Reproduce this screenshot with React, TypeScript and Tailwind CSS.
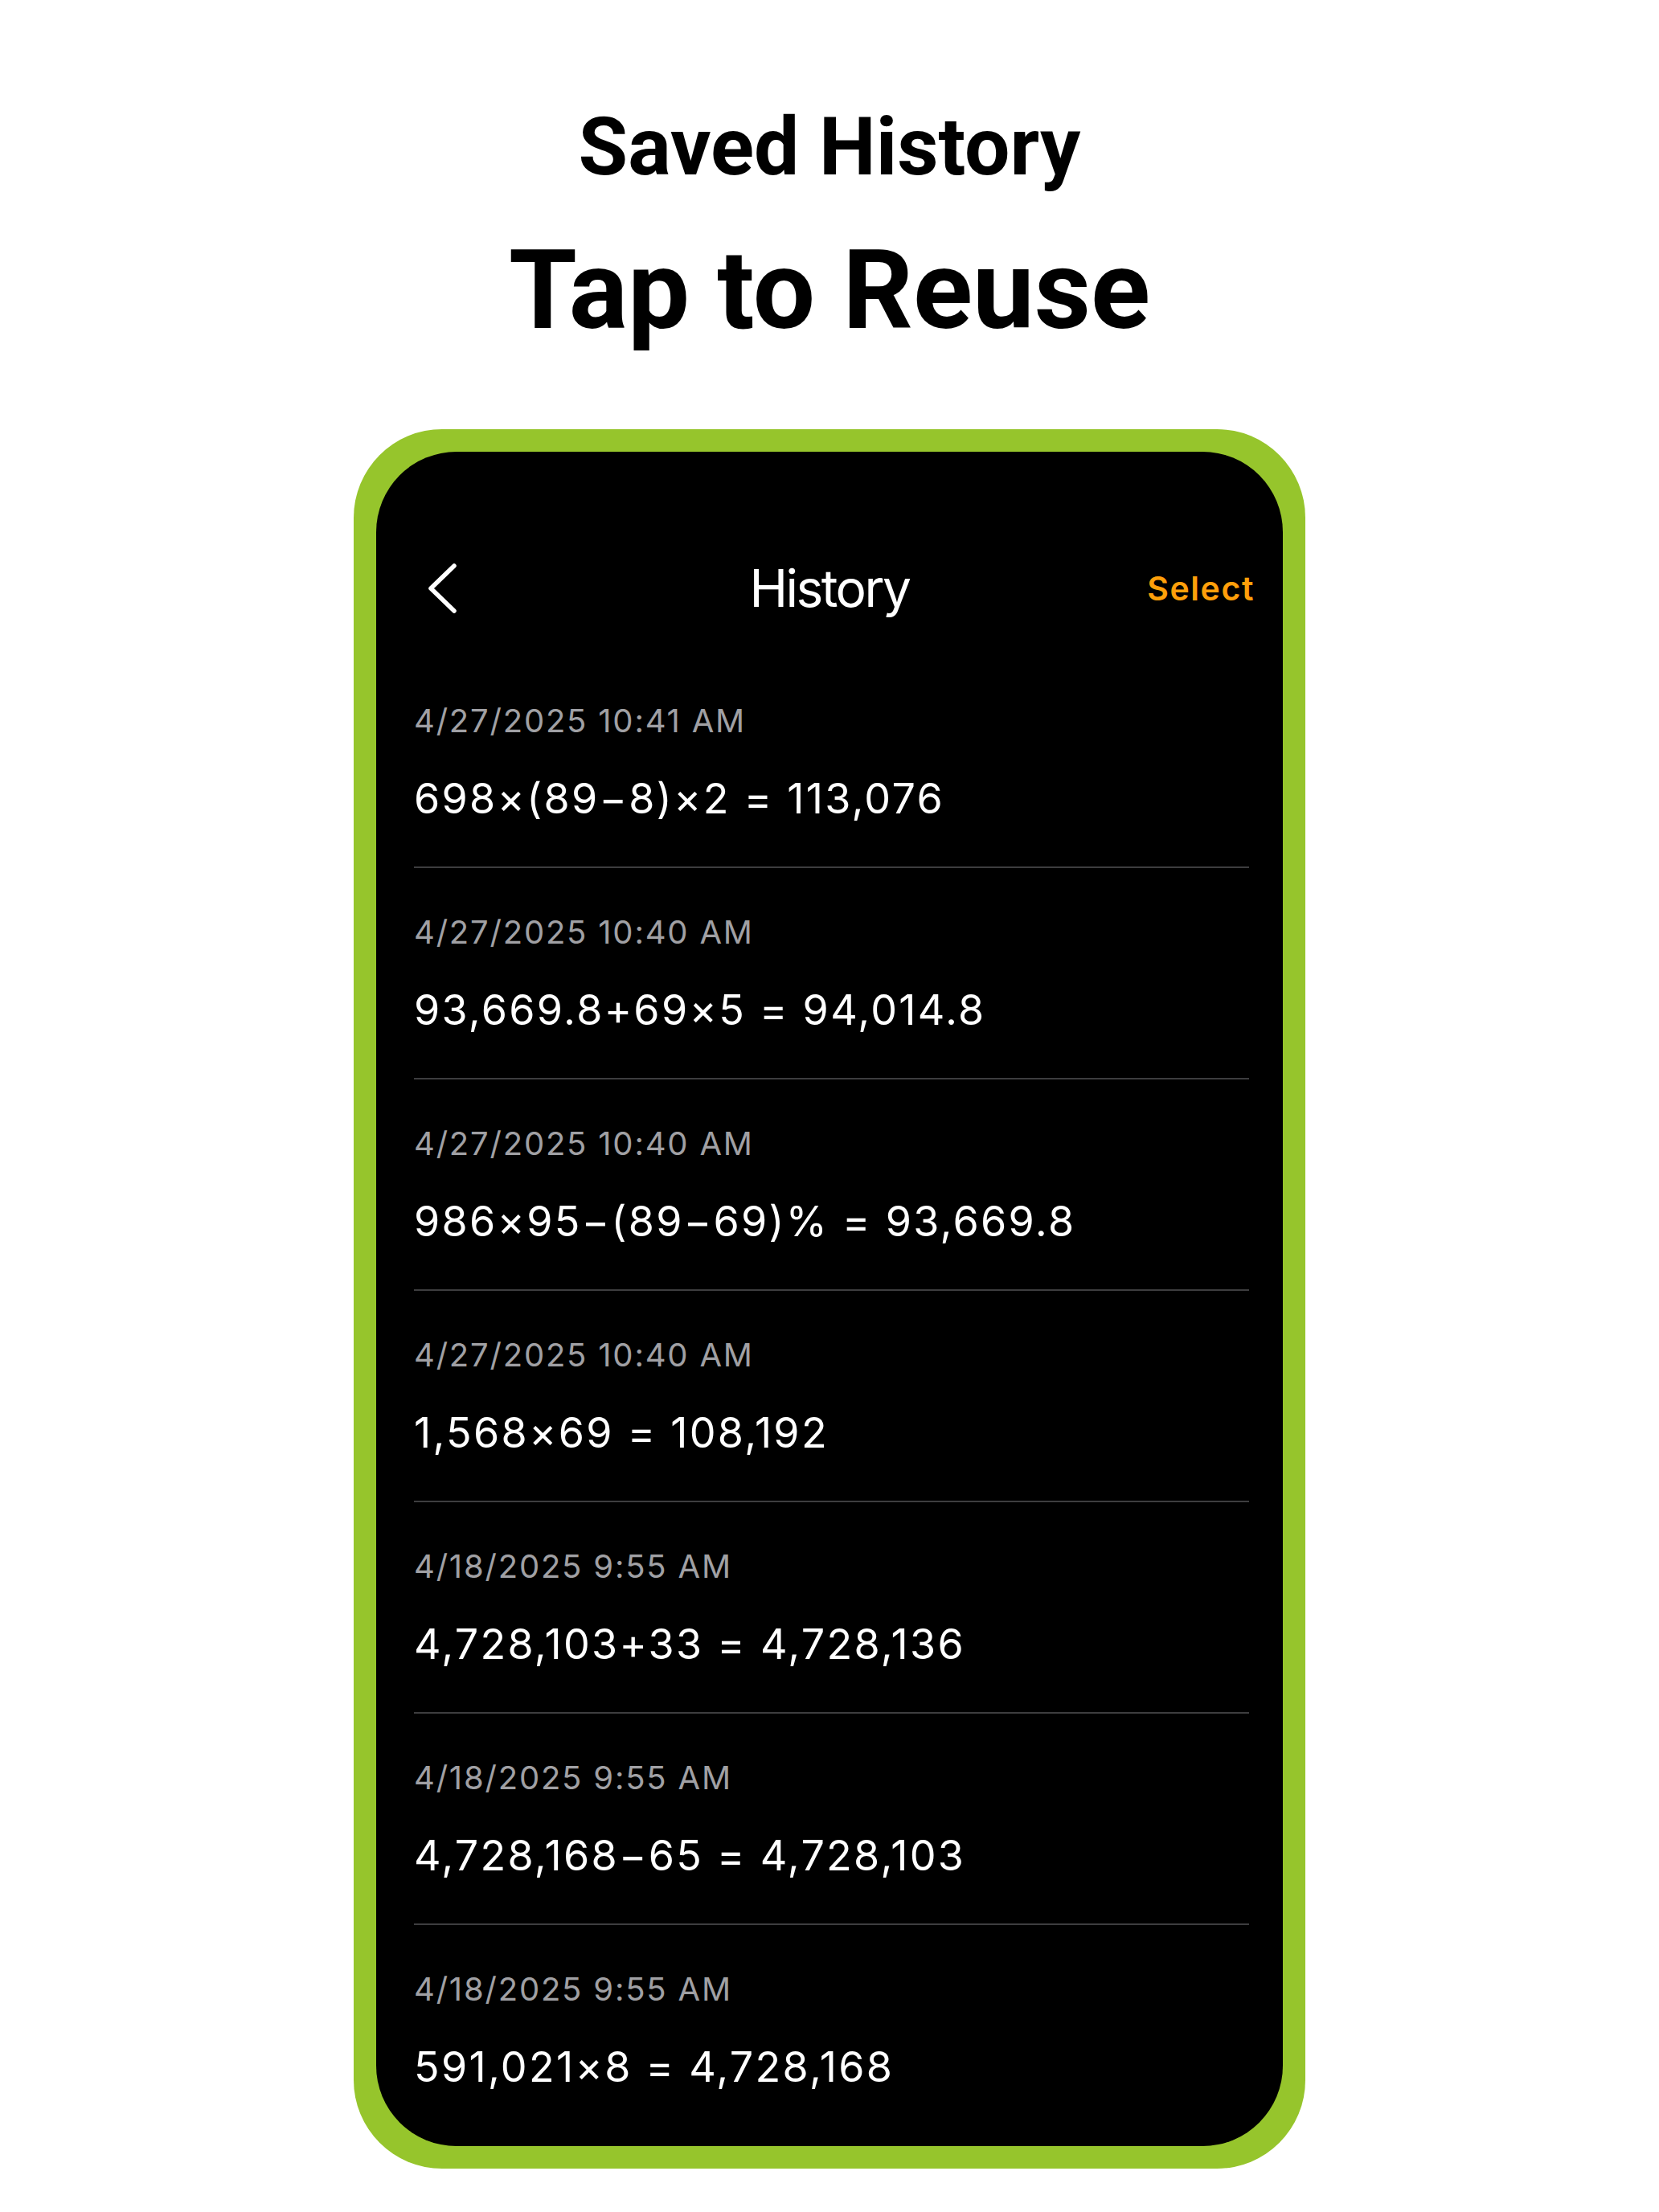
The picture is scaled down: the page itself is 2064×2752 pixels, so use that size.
import React from "react";

interface Entry {
  date: string;
  expr: string;
}

const entries: Entry[] = [
  { date: "4/27/2025 10:41 AM", expr: "698×(89−8)×2 = 113,076" },
  { date: "4/27/2025 10:40 AM", expr: "93,669.8+69×5 = 94,014.8" },
  { date: "4/27/2025 10:40 AM", expr: "986×95−(89−69)% = 93,669.8" },
  { date: "4/27/2025 10:40 AM", expr: "1,568×69 = 108,192" },
  { date: "4/18/2025 9:55 AM", expr: "4,728,103+33 = 4,728,136" },
  { date: "4/18/2025 9:55 AM", expr: "4,728,168−65 = 4,728,103" },
  { date: "4/18/2025 9:55 AM", expr: "591,021×8 = 4,728,168" },
];

function BackChevron() {
  return (
    <svg width="40" height="64" viewBox="0 0 40 64" fill="none">
      <path d="M35 4 L6 32 L35 60" stroke="white" strokeWidth="5.5" strokeLinecap="round" strokeLinejoin="round" />
    </svg>
  );
}

export default function App() {
  return (
    <div className="w-[2064px] h-[2752px] bg-white flex flex-col items-center overflow-hidden">
      {/* headline */}
      <div className="mt-[133px] text-center text-black font-bold font-['Roboto',sans-serif]">
        <div className="text-[100px] leading-[100px]">Saved History</div>
        <div className="mt-[60px] text-[137px] leading-[137px]">Tap to Reuse</div>
      </div>

      {/* phone frame */}
      <div className="mt-[104px] w-[1184px] h-[2164px] rounded-[110px] bg-[#96c52c] p-[28px]">
        <div className="h-full w-full rounded-[100px] bg-black overflow-hidden font-['Inter',sans-serif]">
          {/* nav bar */}
          <div className="mt-[130px] h-[80px] grid grid-cols-[1fr_auto_1fr] items-center">
            <div className="pl-[62px] flex items-center">
              <BackChevron />
            </div>
            <div className="text-white text-[64px] leading-[64px] tracking-[-2.5px]">History</div>
            <div className="flex justify-end pr-[35px]">
              <span className="text-[#ff9f0a] text-[41px] leading-[41px] font-semibold tracking-[1.6px]">Select</span>
            </div>
          </div>

          {/* list */}
          <div className="mt-[45px] ml-[47px] mr-[42px]">
            {entries.map((e, i) => (
              <div
                key={i}
                className={`pt-[60px] pb-[58px] ${i < entries.length - 1 ? "border-b-2 border-[#3d3d3f]" : ""}`}
              >
                <div className="text-[40px] leading-[40px] tracking-[1.8px] text-[#a0a0a4]">{e.date}</div>
                <div className="mt-[51px] text-[52px] leading-[52px] tracking-[2.3px] text-white">{e.expr}</div>
              </div>
            ))}
          </div>
        </div>
      </div>
    </div>
  );
}
